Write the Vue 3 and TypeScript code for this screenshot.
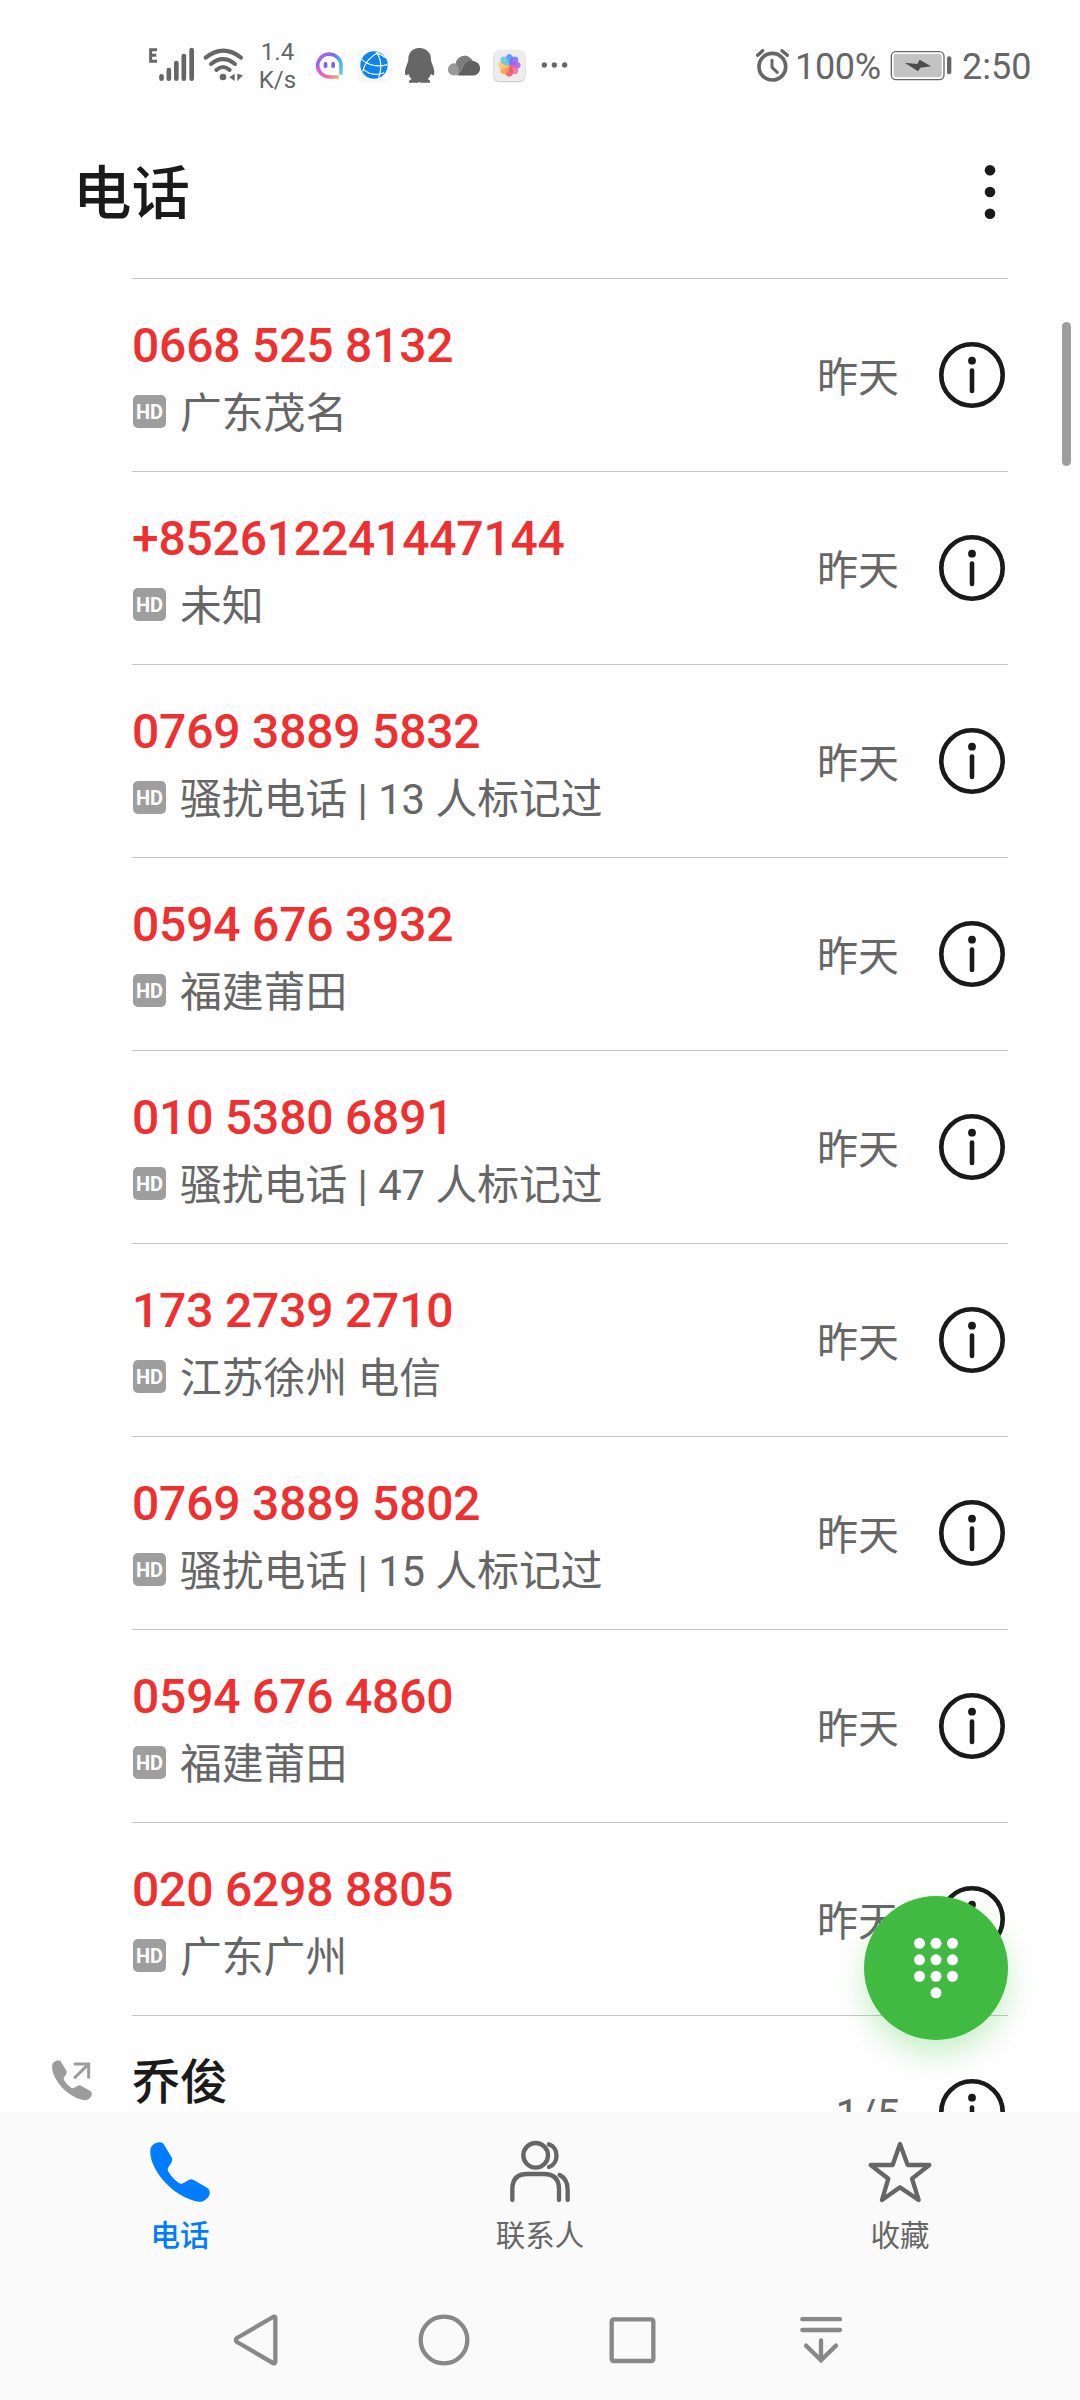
<script setup lang="ts">
interface Call {
  title: string
  detail?: string
  time: string
  missed: boolean
}

const calls: Call[] = [
  { title: '0668 525 8132', detail: '广东茂名', time: '昨天', missed: true },
  { title: '+852612241447144', detail: '未知', time: '昨天', missed: true },
  { title: '0769 3889 5832', detail: '骚扰电话 | 13 人标记过', time: '昨天', missed: true },
  { title: '0594 676 3932', detail: '福建莆田', time: '昨天', missed: true },
  { title: '010 5380 6891', detail: '骚扰电话 | 47 人标记过', time: '昨天', missed: true },
  { title: '173 2739 2710', detail: '江苏徐州 电信', time: '昨天', missed: true },
  { title: '0769 3889 5802', detail: '骚扰电话 | 15 人标记过', time: '昨天', missed: true },
  { title: '0594 676 4860', detail: '福建莆田', time: '昨天', missed: true },
  { title: '020 6298 8805', detail: '广东广州', time: '昨天', missed: true },
  { title: '乔俊', time: '1/5', missed: false },
]

const petals = [
  { angle: 0, color: '#4f8df0' },
  { angle: 45, color: '#7b6cf0' },
  { angle: 90, color: '#a45bea' },
  { angle: 135, color: '#f06a9a' },
  { angle: 180, color: '#f4506a' },
  { angle: 225, color: '#ff9a4a' },
  { angle: 270, color: '#ffc861' },
  { angle: 315, color: '#5cc8ea' },
]

const keys = [
  [0, 0], [1, 0], [2, 0],
  [0, 1], [1, 1], [2, 1],
  [0, 2], [1, 2], [2, 2],
  [1, 3],
]
</script>

<template>
  <div class="screen">
    <header class="status">
      <!-- signal and wifi -->
      <svg class="signal" width="120" height="70" viewBox="0 0 360 210">
        <g fill="none" stroke="#666" stroke-width="9">
          <path d="M81 59H62V94H81M62 76H79" />
        </g>
        <g stroke="#666" stroke-width="14" stroke-linecap="round">
          <path d="M94.500 139V146M116.500 120V146M139 99V146M161.500 78V146M185 60V146" />
        </g>
        <g fill="none" stroke="#666" stroke-width="12" stroke-linecap="round">
          <path d="M227 83Q280 41 333 83" />
          <path d="M243 102Q279 73 315 102" />
          <path d="M259 120Q279 102 299 120" />
        </g>
        <circle cx="279" cy="141" r="10" fill="#666" />
        <path d="M314 131V153L298 142ZM322 131V153L339 136Z" fill="#666" />
      </svg>
      <div class="speed"><span>1.4</span><span>K/s</span></div>
      <!-- chat bubble -->
      <svg width="40" height="70" viewBox="540 0 120 210">
        <defs>
          <linearGradient id="bubble" x1="0" y1="0" x2="1" y2="1">
            <stop offset="0" stop-color="#c95be8" />
            <stop offset=".35" stop-color="#7b6df2" />
            <stop offset=".65" stop-color="#48b4ec" />
            <stop offset="1" stop-color="#67cfd8" />
          </linearGradient>
          <linearGradient id="bubbleFoot" x1="0" y1="0" x2="1" y2="0">
            <stop offset="0" stop-color="#e05bd0" />
            <stop offset=".55" stop-color="#f2739a" />
            <stop offset="1" stop-color="#f5b45c" />
          </linearGradient>
        </defs>
        <path d="M565 119A35 35 0 1 1 633 107V134" fill="none" stroke="url(#bubble)" stroke-width="11" />
        <path d="M564 112A35 33 0 0 0 598 141H627" fill="none" stroke="url(#bubbleFoot)" stroke-width="11" />
        <rect x="581" y="96" width="11" height="18" rx="5" fill="#7b62df" />
        <rect x="604" y="96" width="11" height="18" rx="5" fill="#7b62df" />
      </svg>
      <!-- browser -->
      <svg width="50" height="70" viewBox="-60 0 150 210">
        <rect x="-39" y="54" width="105" height="104" rx="20" fill="#f7f8fa" />
        <circle cx="12" cy="105" r="41" fill="#0f84ec" />
        <path d="M-26 88Q8 116 52 104M26 67Q-12 86 -22 124M18 66Q42 96 26 143M-20 118Q8 142 42 128M22 70Q38 74 46 84" fill="none" stroke="#fff" stroke-width="3.500" />
      </svg>
      <!-- penguin -->
      <svg width="40" height="70" viewBox="90 0 120 210">
        <path d="M148 54C126 54 115 70 115 88C115 99 105 112 105 127C105 136 108 139 115 132Q118 141 125 147Q115 151 117 158H145L148 155L151 158H180Q182 151 173 147Q180 141 183 132C190 139 193 136 193 127C193 112 183 99 183 88C183 70 171 54 148 54Z" fill="#666" />
      </svg>
      <!-- clouds -->
      <svg width="45" height="70" viewBox="210 0 135 210">
        <path d="M254 136A18 18 0 1 1 257 101A27 27 0 0 1 309 95L278 136Z" fill="#999" />
        <path d="M257 101A27 27 0 0 1 309 95L280 104L266 136Q270 112 257 101Z" fill="#7d7d7d" />
        <path d="M263 136Q276 124 280 109C287 92 306 88 320 97C334 106 334 126 319 134Q312 138 263 136Z" fill="#606060" />
      </svg>
      <!-- gallery -->
      <svg width="45" height="70" viewBox="345 0 135 210">
        <rect x="369" y="61" width="98" height="96" rx="20" fill="#d0d0d0" />
        <rect x="370" y="59" width="96" height="94" rx="19" fill="#ececec" />
        <g v-for="p in petals" :key="p.angle" :transform="`rotate(${p.angle} 418 106)`">
          <path d="M418 106C403 97 403 74 418 72C433 74 433 97 418 106Z" :fill="p.color" opacity=".85" />
        </g>
      </svg>
      <svg width="45" height="70" viewBox="480 0 135 210" fill="#666">
        <circle cx="523" cy="105" r="8" />
        <circle cx="553" cy="105" r="8" />
        <circle cx="584" cy="105" r="8" />
      </svg>
      <!-- alarm -->
      <svg class="alarm" width="45" height="70" viewBox="30 0 135 210" fill="none" stroke="#666" stroke-linecap="round">
        <circle cx="97" cy="110" r="40" stroke-width="11" />
        <path d="M96 91V112L112 127" stroke-width="9" stroke-linejoin="round" />
        <path d="M53 76L68 62M126 62L142 76" stroke-width="10" />
      </svg>
      <span class="percent">100%</span>
      <!-- battery -->
      <svg class="battery" width="68" height="70" viewBox="441 0 204 210">
        <rect x="454" y="65" width="158" height="84" rx="14" fill="#fff" stroke="#666" stroke-width="4" />
        <rect x="461" y="72" width="144" height="70" rx="6" fill="#c3c3c3" />
        <path d="M494 98L532 102L539 89L573 109L541 113L534 124Z" fill="#4d4d4d" />
        <rect x="621" y="79" width="13" height="54" rx="6" fill="#666" />
      </svg>
      <span class="clock">2:50</span>
    </header>

    <div class="titlebar">
      <h1>电话</h1>
      <svg class="more" width="12" height="56" viewBox="0 0 12 56" fill="#1a1a1a">
        <circle cx="6" cy="6.300" r="5.300" />
        <circle cx="6" cy="28" r="5.300" />
        <circle cx="6" cy="49.700" r="5.300" />
      </svg>
    </div>

    <main class="list">
      <article v-for="call in calls" :key="call.title" class="row">
        <div class="kind">
          <svg v-if="!call.missed" width="42" height="42" viewBox="60 236 126 126">
            <path transform="translate(-175 -84) scale(.667)" d="M362 512C362 497 377 486 390 487C396 487 400 489 403 494L426 532C429 538 428 543 425 548L416 562C413 567 414 571 417 577C425 590 435 600 447 609C453 612 457 612 462 609L477 600C482 597 487 597 492 600L532 623C539 627 541 633 540 641C537 654 522 667 507 665C470 660 427 634 398 598C376 570 360 538 362 512Z" fill="#9c9c9c" />
            <path d="M135 251H176V291M174 253L135 291" fill="none" stroke="#9c9c9c" stroke-width="9" stroke-linecap="round" />
          </svg>
        </div>
        <div class="entry">
          <div class="who">
            <div class="number" :class="{ missed: call.missed }">{{ call.title }}</div>
            <div v-if="call.detail" class="detail">
              <span class="hd">HD</span><span>{{ call.detail }}</span>
            </div>
          </div>
          <span class="time" :class="{ relative: call.missed }">{{ call.time }}</span>
          <svg class="info" width="66" height="66" viewBox="0 0 66 66">
            <circle cx="33" cy="33" r="30.700" fill="none" stroke="#1a1a1a" stroke-width="4.600" />
            <circle cx="33" cy="18.700" r="3.900" fill="#1a1a1a" />
            <path d="M33 28.500V49" stroke="#1a1a1a" stroke-width="4.600" stroke-linecap="round" />
          </svg>
        </div>
      </article>
    </main>

    <nav class="tabs">
      <div class="tab active">
        <svg width="60" height="60" viewBox="361 486 180 180">
          <path d="M362 512C362 497 377 486 390 487C396 487 400 489 403 494L426 532C429 538 428 543 425 548L416 562C413 567 414 571 417 577C425 590 435 600 447 609C453 612 457 612 462 609L477 600C482 597 487 597 492 600L532 623C539 627 541 633 540 641C537 654 522 667 507 665C470 660 427 634 398 598C376 570 360 538 362 512Z" fill="#007dff" />
        </svg>
        <span>电话</span>
      </div>
      <div class="tab">
        <svg width="60" height="60" viewBox="180 96 180 180" fill="none" stroke="#666" stroke-width="13" stroke-linecap="round">
          <circle cx="257" cy="136" r="37" />
          <path d="M297 103C327 112 327 160 297 171" />
          <path d="M187 270V237Q187 192 232 192H281Q327 192 327 237V270" />
          <path d="M329 195Q353 207 353 239V270" />
        </svg>
        <span>联系人</span>
      </div>
      <div class="tab">
        <svg width="66" height="60" viewBox="141 96 198 180" fill="none" stroke="#666" stroke-width="13" stroke-linecap="round" stroke-linejoin="round">
          <path d="M240 102L263 165H328L276 206L296 270L240 232L186 270L205 206L152 165H218Z" />
        </svg>
        <span>收藏</span>
      </div>
    </nav>

    <footer class="system">
      <svg width="60" height="60" viewBox="78 90 180 180" fill="none" stroke="#888" stroke-width="13" stroke-linejoin="round">
        <path d="M219 111Q226 107 226 115V244Q226 253 219 249L111 186Q104 180 111 174Z" />
      </svg>
      <svg width="60" height="60" viewBox="642 90 180 180" fill="none" stroke="#888" stroke-width="13">
        <circle cx="732" cy="180" r="70" />
      </svg>
      <svg width="60" height="60" viewBox="128 90 180 180" fill="none" stroke="#888" stroke-width="13">
        <rect x="154" y="118" width="125" height="125" rx="6" />
      </svg>
      <svg width="60" height="60" viewBox="693 90 180 180" fill="none" stroke="#888" stroke-width="13" stroke-linecap="round">
        <path d="M727 117.500H840M727 150H840M783 181V240" />
        <path d="M738 197L783 241L828 197" />
      </svg>
    </footer>

    <div class="scrollbar"></div>
    <div class="fab">
      <svg width="144" height="144" viewBox="0 0 144 144" fill="#fff">
        <circle v-for="([c, r], i) in keys" :key="i" :cx="55.500 + c * 16.500" :cy="47.300 + r * 16.500" r="5.500" />
      </svg>
    </div>
  </div>
</template>

<style>
body {
  background: #fefefe;
}
</style>

<style scoped>
.screen {
  position: relative;
  display: flex;
  flex-direction: column;
  width: 1080px;
  height: 2400px;
  overflow: hidden;
  background: #fefefe;
  color: #666;
  font-family: Roboto, 'Noto Sans CJK SC', sans-serif;
}

svg {
  display: block;
  flex: none;
  overflow: visible;
}

.status {
  display: flex;
  height: 78px;
  padding: 30px 0 0 130px;
}

.speed {
  display: flex;
  flex-direction: column;
  align-items: center;
  width: 60px;
  margin-top: 8px;
  padding-right: 5px;
  box-sizing: border-box;
  font-size: 24px;
  line-height: 28px;
}

.alarm {
  margin-left: 175px;
}

.percent,
.clock {
  font-size: 36px;
  line-height: 44px;
  margin-top: 15px;
}

.percent {
  width: 92px;
  letter-spacing: -0.3px;
}

.clock {
  margin-left: 7px;
}

.titlebar {
  display: flex;
  align-items: center;
  justify-content: space-between;
  height: 170px;
  padding: 0 84px 0 73px;
  box-sizing: border-box;
}

h1 {
  margin: 2px 0 0;
  color: #1a1a1a;
  font-size: 58.5px;
  font-weight: 500;
  line-height: 80px;
}

.more {
  margin-bottom: 2px;
}

.list {
  display: flex;
  flex-direction: column;
  height: 1834px;
  overflow: hidden;
}

.row {
  display: flex;
  flex: none;
  height: 193px;
}

.kind {
  width: 132px;
  padding: 44px 0 0 50px;
  box-sizing: border-box;
}

.entry {
  display: flex;
  width: 876px;
  border-top: 1px solid #c6c6c6;
  box-sizing: border-box;
}

.who {
  flex: 1;
  padding-top: 39px;
}

.number {
  color: #1a1a1a;
  font-size: 48px;
  font-weight: 500;
  line-height: 56px;
  white-space: nowrap;
}

.number.missed {
  color: #ef3030;
  letter-spacing: -0.2px;
}

.detail {
  display: flex;
  align-items: center;
  gap: 14px;
  margin-top: 16px;
  font-size: 41.8px;
  line-height: 48px;
  white-space: nowrap;
}

.hd {
  width: 33px;
  height: 33px;
  margin: 0 0 5px 1px;
  border-radius: 5px;
  background: #9e9e9e;
  color: #fff;
  font-size: 20px;
  font-weight: 700;
  line-height: 34px;
  text-align: center;
}

.time {
  margin: 75px 39px 0 0;
  font-size: 42px;
  line-height: 48px;
}

.time.relative {
  margin-right: 40px;
  font-size: 41px;
}

.info {
  margin: 63px 3px 0 0;
}

.tabs {
  display: flex;
  height: 168px;
  background: #fafafa;
}

.tab {
  display: flex;
  flex: 1;
  flex-direction: column;
  align-items: center;
  gap: 14px;
  padding-top: 30px;
  font-size: 29.5px;
  line-height: 40px;
}

.tab.active {
  color: #007dff;
  font-weight: 500;
}

.system {
  display: flex;
  justify-content: space-between;
  align-items: center;
  height: 120px;
  padding: 0 229px 0 226px;
  background: #fafafa;
}

.scrollbar {
  position: absolute;
  top: 322px;
  right: 9px;
  width: 9px;
  height: 144px;
  border-radius: 5px;
  background: #9e9e9e;
}

.fab {
  position: absolute;
  top: 1896px;
  left: 864px;
  width: 144px;
  height: 144px;
  border-radius: 50%;
  background: #41ba41;
  box-shadow: 0 14px 28px rgba(65, 200, 65, 0.28);
}
</style>
